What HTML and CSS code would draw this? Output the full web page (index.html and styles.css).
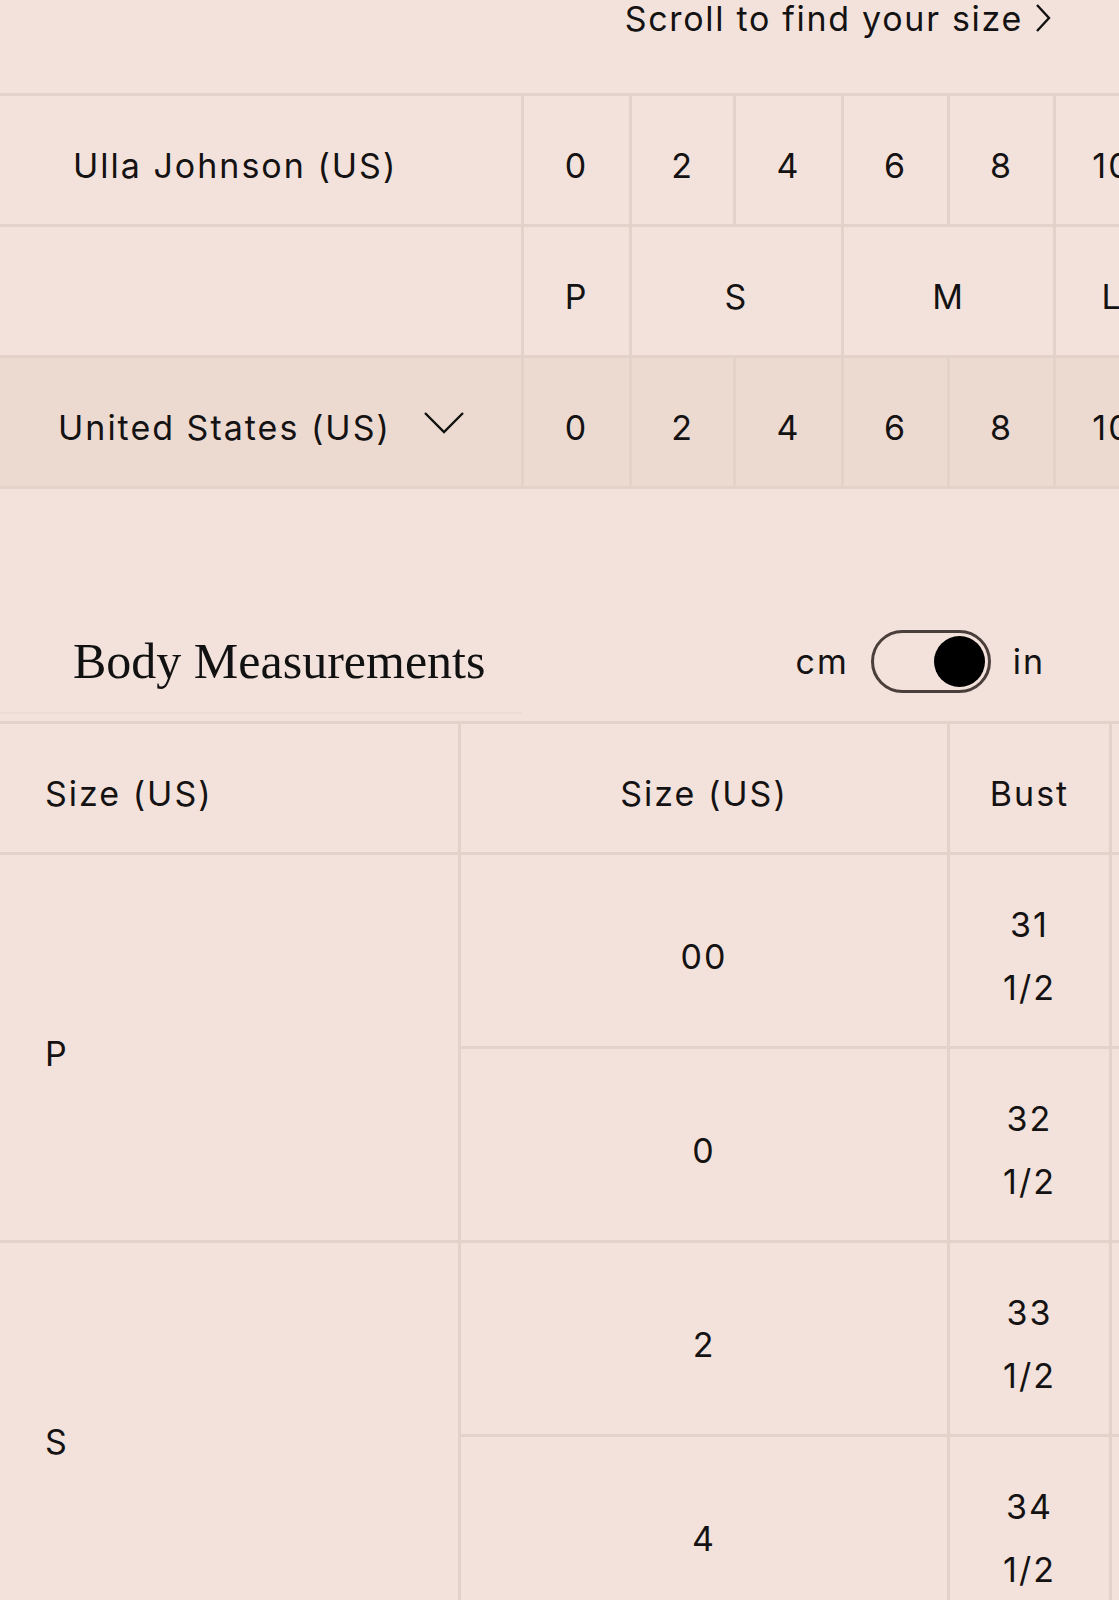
FILE: index.html
```html
<!DOCTYPE html>
<html lang="en">
<head>
<meta charset="utf-8">
<title>Size Guide</title>
<link rel="stylesheet" href="styles.css">
</head>
<body>
<div class="page">
  <div class="scroll-hint">
    <span>Scroll to find your size</span>
    <svg class="hint-chevron" width="16" height="30" viewBox="0 0 16 30"><path d="M2 2 L14 15 L2 28" fill="none" stroke="#111" stroke-width="2.4"/></svg>
  </div>

  <div class="conv-table">
    <div class="cell label label-brand">Ulla Johnson (US)</div>
    <div class="cell">0</div>
    <div class="cell">2</div>
    <div class="cell">4</div>
    <div class="cell">6</div>
    <div class="cell">8</div>
    <div class="cell">10</div>
    <div class="cell">12</div>
    <div class="cell">14</div>

    <div class="cell label"></div>
    <div class="cell">P</div>
    <div class="cell span2">S</div>
    <div class="cell span2">M</div>
    <div class="cell">L</div>
    <div class="cell span2">XL</div>

    <div class="cell label label-select alt">
      <span>United States (US)</span>
      <svg class="select-chevron" width="42" height="24" viewBox="0 0 42 24"><path d="M2 2 L21 21 L40 2" fill="none" stroke="#111" stroke-width="2.4"/></svg>
    </div>
    <div class="cell alt">0</div>
    <div class="cell alt">2</div>
    <div class="cell alt">4</div>
    <div class="cell alt">6</div>
    <div class="cell alt">8</div>
    <div class="cell alt">10</div>
    <div class="cell alt">12</div>
    <div class="cell alt">14</div>
  </div>

  <section class="measure">
    <div class="measure-head">
      <h2 class="measure-title">Body Measurements</h2>
      <div class="unit-toggle">
        <span>cm</span>
        <span class="switch"><span class="knob"></span></span>
        <span>in</span>
      </div>
    </div>
    <div class="measure-rule"></div>

    <div class="measure-table">
      <div class="m-cell m-group">Size (US)</div>
      <div class="m-cell">Size (US)</div>
      <div class="m-cell">Bust</div>
      <div class="m-cell">Waist</div>

      <div class="m-cell m-group span-rows">P</div>
      <div class="m-cell">00</div>
      <div class="m-cell">31<br>1/2</div>
      <div class="m-cell">24<br>1/2</div>
      <div class="m-cell">0</div>
      <div class="m-cell">32<br>1/2</div>
      <div class="m-cell">25<br>1/2</div>

      <div class="m-cell m-group span-rows">S</div>
      <div class="m-cell">2</div>
      <div class="m-cell">33<br>1/2</div>
      <div class="m-cell">26<br>1/2</div>
      <div class="m-cell">4</div>
      <div class="m-cell">34<br>1/2</div>
      <div class="m-cell">27<br>1/2</div>
    </div>
  </section>
</div>
</body>
</html>
```

FILE: styles.css
```css
* { box-sizing: border-box; }

html, body {
  margin: 0;
  padding: 0;
  background: #f3e2db;
  overflow: hidden;
}

body {
  font-family: "Inter", "Liberation Sans", sans-serif;
  font-size: 34px;
  letter-spacing: 2px;
  color: #141212;
}

.page {
  width: 1119px;
  overflow: hidden;
}

/* Scroll hint */
.scroll-hint {
  height: 93px;
  display: flex;
  justify-content: flex-end;
  align-items: flex-start;
  gap: 12px;
  padding-right: 68px;
  line-height: 38px;
  letter-spacing: 1.7px;
}

.hint-chevron {
  margin-top: 3px;
}

/* Conversion table */
.conv-table {
  display: grid;
  grid-template-columns: 521px 105px 101px 105px 103px 103px 112px 105px 105px;
  gap: 3px;
  padding: 3px 0;
  background: #e2d2ca;
  width: max-content;
}

.cell {
  background: #f3e2db;
  padding: 38px 0 27px;
  line-height: 63px;
  height: 128px;
  text-align: center;
}

.cell.alt {
  background: #ecdad1;
}

.span2 {
  grid-column: span 2;
}

.label {
  text-align: left;
}

.label-brand {
  padding-left: 73px;
}

.label-select {
  display: flex;
  align-items: center;
  padding-left: 58px;
  gap: 32px;
}

.select-chevron {
  margin-top: -10px;
}

/* Body measurements */
.measure {
  margin-top: 141px;
}

.measure-head {
  height: 63px;
  display: flex;
  align-items: center;
  justify-content: space-between;
  padding: 0 74px 0 73px;
}

.measure-title {
  margin: 0;
  font-family: "Liberation Serif", "Times New Roman", serif;
  font-weight: normal;
  font-size: 50px;
  letter-spacing: 0;
  line-height: 63px;
  color: #111;
}

.unit-toggle {
  display: flex;
  align-items: center;
  gap: 22px;
}

.switch {
  width: 120px;
  height: 63px;
  border: 3px solid #4a3f3a;
  border-radius: 32px;
  display: flex;
  align-items: center;
  justify-content: flex-end;
  padding-right: 3px;
}

.knob {
  width: 51px;
  height: 51px;
  border-radius: 50%;
  background: #000;
}

.measure-rule {
  width: 522px;
  height: 2px;
  margin: 19px 0 7px;
  background: #ecdcd4;
}

.measure-table {
  display: grid;
  grid-template-columns: 458px 486px 159px 200px;
  gap: 3px;
  padding-top: 3px;
  background: #e2d2ca;
  width: max-content;
}

.m-cell {
  background: #f3e2db;
  padding: 38px 0 27px;
  line-height: 63px;
  text-align: center;
  display: flex;
  align-items: center;
  justify-content: center;
}

.m-group {
  justify-content: flex-start;
  text-align: left;
  padding-left: 45px;
}

.span-rows {
  grid-row: span 2;
}
```
